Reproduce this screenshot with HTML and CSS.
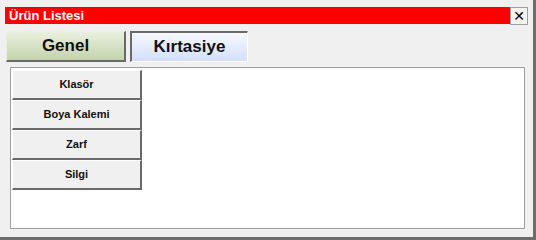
FILE: index.html
```html
<!DOCTYPE html>
<html lang="tr">
<head>
  <meta charset="UTF-8" />
  <title>Ürün Listesi</title>
  <link rel="stylesheet" href="styles.css">
</head>
<body>
  <div class="window">
    <div class="titlebar">
      <div class="title">Ürün Listesi</div>
      <div class="close">✕</div>
    </div>

    <div class="tabs">
      <div class="tab genel">Genel</div>
      <div class="tab kirtasiye">Kırtasiye</div>
    </div>

    <div class="panel">
      <div class="items">
        <div class="item">Klasör</div>
        <div class="item">Boya Kalemi</div>
        <div class="item">Zarf</div>
        <div class="item">Silgi</div>
      </div>
    </div>
  </div>
</body>
</html>
```

FILE: styles.css
```css
html, body {
  margin: 0;
  padding: 0;
  background: #ffffff;
}
body {
  font-family: Tahoma, "Liberation Sans", "DejaVu Sans", sans-serif;
}
.window {
  background: #f0f0f0;
  border-right: 3px solid #6d6d6d;
  border-bottom: 3px solid #6d6d6d;
  padding: 7px 0 0 5px;
  width: 528px;
  height: 230px;
}
.titlebar {
  display: flex;
  height: 18px;
}
.title {
  background: #ff0000;
  color: #ffffff;
  font-weight: bold;
  font-size: 13px;
  line-height: 17px;
  height: 17px;
  padding-left: 4px;
  width: 501px;
}
.close {
  width: 16px;
  height: 16px;
  border: 1px solid #a0a0a0;
  background: #f4f4f4;
  color: #000000;
  font-weight: bold;
  font-size: 14px;
  line-height: 16px;
  text-align: center;
}
.tabs {
  display: flex;
  gap: 4px;
  margin-top: 6px;
  margin-left: 1px;
}
.tab {
  height: 28px;
  font-weight: bold;
  font-size: 17px;
  line-height: 28px;
  text-align: center;
  color: #111111;
}
.genel {
  width: 117px;
  background: linear-gradient(#e9f0de, #c4d3ad);
  border-top: 1px solid #e8eee0;
  border-left: 1px solid #e8eee0;
  border-right: 2px solid #6a6a6a;
  border-bottom: 2px solid #6a6a6a;
}
.kirtasiye {
  width: 115px;
  background: linear-gradient(#f6f8fe, #d3dffb);
  border-top: 2px solid #6a6a6a;
  border-left: 2px solid #6a6a6a;
  border-right: 1px solid #ffffff;
  border-bottom: 1px solid #ffffff;
}
.panel {
  margin: 5px 0 0 5px;
  width: 512px;
  height: 158px;
  background: #ffffff;
  border: 1px solid #a0a0a0;
  padding: 2px 0 0 1px;
}
.items {
  display: flex;
  flex-direction: column;
  width: 130px;
}
.item {
  height: 27px;
  line-height: 27px;
  background: #f0f0f0;
  border-top: 1px solid #ffffff;
  border-left: 1px solid #ffffff;
  border-right: 2px solid #6a6a6a;
  border-bottom: 2px solid #6a6a6a;
  font-weight: bold;
  font-size: 11px;
  text-align: center;
  color: #111111;
}
```
